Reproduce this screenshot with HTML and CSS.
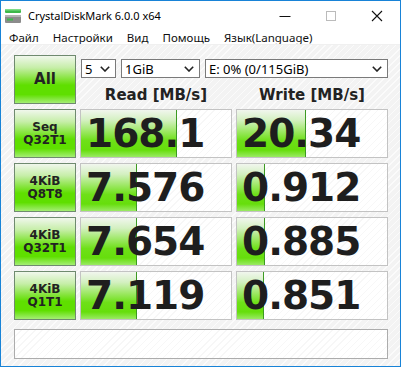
FILE: index.html
```html
<!DOCTYPE html>
<html lang="ru">
<head>
    <meta charset="UTF-8">
    <title>CrystalDiskMark 6.0.0 x64</title>
    <link rel="stylesheet" href="styles.css">
</head>
<body>
    <div class="window">
        <div class="titlebar">
            <svg class="app-icon" width="18" height="16" viewBox="0 0 18 16">
                <rect x="1" y="1" width="16" height="4" rx="1" fill="#3db84a"/>
                <rect x="1" y="1" width="16" height="1.5" fill="#7fdc86"/>
                <rect x="1" y="7" width="16" height="8" rx="1" fill="#8c8c8c"/>
                <rect x="1" y="7" width="16" height="2" fill="#b4b4b4"/>
                <rect x="3" y="10.5" width="6" height="2" fill="#3db84a"/>
            </svg>
            <span class="title">CrystalDiskMark 6.0.0 x64</span>
            <div class="controls">
                <span class="ctl">
                    <svg width="12" height="12" viewBox="0 0 12 12"><path d="M0.5 6.5h11" stroke="#111" stroke-width="1"/></svg>
                </span>
                <span class="ctl">
                    <svg width="12" height="12" viewBox="0 0 12 12"><rect x="1.5" y="1.5" width="9" height="9" fill="none" stroke="#bbb" stroke-width="1"/></svg>
                </span>
                <span class="ctl">
                    <svg width="12" height="12" viewBox="0 0 12 12"><path d="M1 1L11 11M11 1L1 11" stroke="#111" stroke-width="1.1"/></svg>
                </span>
            </div>
        </div>

        <nav class="menubar">
            <span>Файл</span>
            <span>Настройки</span>
            <span>Вид</span>
            <span>Помощь</span>
            <span>Язык(Language)</span>
        </nav>

        <main class="client">
            <div class="top">
                <div class="test-btn all">All</div>
                <div class="selects">
                    <div class="select sel-count">5<svg class="chev" width="10" height="6" viewBox="0 0 10 6"><path d="M0.8 0.8L5 5L9.2 0.8" fill="none" stroke="#222" stroke-width="1.6"/></svg></div>
                    <div class="select sel-size">1GiB<svg class="chev" width="10" height="6" viewBox="0 0 10 6"><path d="M0.8 0.8L5 5L9.2 0.8" fill="none" stroke="#222" stroke-width="1.6"/></svg></div>
                    <div class="select sel-drive">E: 0% (0/115GiB)<svg class="chev" width="10" height="6" viewBox="0 0 10 6"><path d="M0.8 0.8L5 5L9.2 0.8" fill="none" stroke="#222" stroke-width="1.6"/></svg></div>
                </div>
                <div class="col-head">Read [MB/s]</div>
                <div class="col-head">Write [MB/s]</div>
            </div>

            <div class="results">
                <div class="test-btn">Seq<br>Q32T1</div>
                <div class="cell"><div class="bar" style="width:96px"></div><span class="num">168.1</span></div>
                <div class="cell"><div class="bar" style="width:69px"></div><span class="num">20.34</span></div>

                <div class="test-btn">4KiB<br>Q8T8</div>
                <div class="cell"><div class="bar" style="width:56px"></div><span class="num">7.576</span></div>
                <div class="cell"><div class="bar" style="width:28px"></div><span class="num">0.912</span></div>

                <div class="test-btn">4KiB<br>Q32T1</div>
                <div class="cell"><div class="bar" style="width:56px"></div><span class="num">7.654</span></div>
                <div class="cell"><div class="bar" style="width:28px"></div><span class="num">0.885</span></div>

                <div class="test-btn">4KiB<br>Q1T1</div>
                <div class="cell"><div class="bar" style="width:56px"></div><span class="num">7.119</span></div>
                <div class="cell"><div class="bar" style="width:27px"></div><span class="num">0.851</span></div>
            </div>

            <div class="comment"></div>
        </main>
    </div>
</body>
</html>
```

FILE: styles.css
```css
body {
    margin: 0;
    padding: 0;
    background: #fff;
    font-family: 'Noto Sans', sans-serif;
    color: #111;
}

.window {
    width: 401px;
    height: 367px;
    box-sizing: border-box;
    border: 1px solid #1883d7;
    display: flex;
    flex-direction: column;
    background: #fff;
}

/* title bar */

.titlebar {
    height: 29px;
    display: flex;
    align-items: center;
    flex-shrink: 0;
}

.app-icon {
    margin: 0 6px 0 3px;
}

.title {
    font-size: 11px;
    color: #000;
}

.controls {
    margin-left: auto;
    display: flex;
}

.ctl {
    width: 46px;
    height: 29px;
    display: flex;
    align-items: center;
    justify-content: center;
}

/* menu */

.menubar {
    height: 14px;
    display: flex;
    align-items: center;
    padding: 0 0 0 1px;
    font-size: 11.5px;
    flex-shrink: 0;
}

.menubar span {
    padding: 0 7px;
}

/* client area */

.client {
    flex: 1;
    padding: 10px 0 0 13px;
    border-top: 1px solid #f0f0f0;
    background: repeating-linear-gradient(135deg, #f3f3f3 0, #f3f3f3 4px, #fbfbfb 4px, #fbfbfb 5px);
}

.top {
    display: grid;
    grid-template-columns: 62px 152px 152px;
    grid-template-rows: 27px 22px;
    column-gap: 4px;
}

.test-btn {
    box-sizing: border-box;
    border: 1px solid #6f8a6f;
    background: linear-gradient(to bottom, #f0f7ec 0%, #c6eea8 25%, #86e43e 48%, #5fdf00 62%, #5fdf00 82%, #a4ee74 100%);
    font-family: 'DejaVu Sans', sans-serif;
    font-weight: bold;
    font-size: 12px;
    line-height: 13px;
    color: #222;
    display: flex;
    align-items: center;
    justify-content: center;
    text-align: center;
}

.test-btn.all {
    grid-row: 1 / 3;
    font-size: 15px;
}

.selects {
    grid-column: 2 / 4;
    display: flex;
    align-items: center;
    gap: 5px;
    padding-left: 1px;
}

.select {
    box-sizing: border-box;
    height: 19px;
    border: 1px solid #7a7a7a;
    background: #fff;
    font-size: 13px;
    color: #000;
    display: flex;
    align-items: center;
    padding: 0 5px 0 3px;
    white-space: nowrap;
}

.select .chev {
    margin-left: auto;
}

.sel-count { width: 35px; }
.sel-size { width: 79px; }
.sel-drive { width: 183px; }

.col-head {
    font-family: 'DejaVu Sans', sans-serif;
    font-weight: bold;
    font-size: 15px;
    color: #222;
    text-align: center;
    padding-top: 4px;
}

/* results */

.results {
    margin-top: 5px;
    display: grid;
    grid-template-columns: 62px 152px 152px;
    grid-auto-rows: 49px;
    gap: 5px 4px;
}

.cell {
    box-sizing: border-box;
    border: 1px solid #c3c3c3;
    background: repeating-linear-gradient(135deg, #fff 0, #fff 4px, #f7f7f7 4px, #f7f7f7 5px);
    display: grid;
    align-items: center;
}

.bar {
    grid-area: 1 / 1;
    align-self: stretch;
    box-sizing: border-box;
    border-right: 1px solid #3c9a22;
    background: linear-gradient(to bottom, #f1f6ee 0%, #d3f0c0 22%, #9ee866 45%, #6ee018 65%, #66de0c 85%, #9aea64 100%);
}

.num {
    grid-area: 1 / 1;
    font-family: 'DejaVu Sans', sans-serif;
    font-weight: bold;
    font-size: 39px;
    letter-spacing: -1px;
    line-height: 1;
    color: #1e1e1e;
    padding-left: 5px;
    position: relative;
}

.comment {
    margin-top: 9px;
    width: 374px;
    height: 30px;
    box-sizing: border-box;
    border: 1px solid #acacac;
    background: repeating-linear-gradient(135deg, #fff 0, #fff 4px, #f7f7f7 4px, #f7f7f7 5px);
}
```
